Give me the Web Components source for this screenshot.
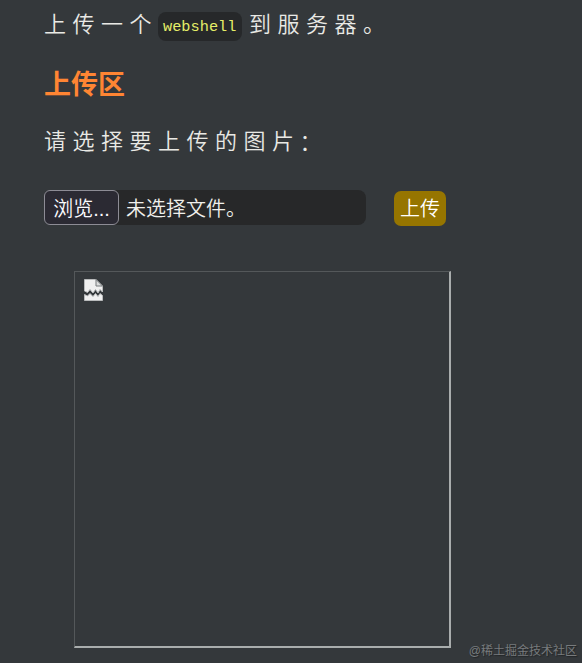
<!DOCTYPE html>
<html lang="zh-CN">
<head>
<meta charset="utf-8">
<title>上传区</title>
<style>
    body {
        margin: 0;
        background: #34383b;
    }
</style>
</head>
<body>
<upload-page>
    <task-text>上传一个<code-tag>webshell</code-tag>到服务器。</task-text>
    <section-title>上传区</section-title>
    <task-text>请选择要上传的图片<text-colon>：</text-colon></task-text>
    <upload-form>
        <file-field label="浏览...">未选择文件。</file-field>
        <submit-button>上传</submit-button>
    </upload-form>
    <image-preview></image-preview>
    <water-mark slot="mark">@稀土掘金技术社区</water-mark>
</upload-page>

<script>
class BaseElement extends HTMLElement {
    constructor() {
        super();
        this.attachShadow({mode: 'open'});
        this.shadowRoot.innerHTML = this.constructor.template;
    }
}

class UploadPage extends BaseElement {
    static template = `
<style>
    :host {
        display: block;
        position: relative;
        box-sizing: border-box;
        width: 582px;
        height: 663px;
        padding: 7px 0 0 44px;
        overflow: hidden;
        background: #34383b;
        color: #e9e9e5;
        font-family: "Liberation Sans", "Noto Sans CJK SC", sans-serif;
    }
    .content {
        display: flex;
        flex-direction: column;
        align-items: flex-start;
    }
</style>
<div class="content"><slot></slot></div>
<slot name="mark"></slot>`;
}
customElements.define('upload-page', UploadPage);

class TaskText extends BaseElement {
    static template = `
<style>
    :host {
        display: flex;
        align-items: center;
        height: 36px;
        font-size: 22px;
        font-weight: 350;
        line-height: 36px;
        letter-spacing: 6.5px;
        white-space: nowrap;
    }
</style>
<slot></slot>`;
}
customElements.define('task-text', TaskText);

class TextColon extends BaseElement {
    static template = `
<style>
    :host {
        display: block;
        margin: 2px 0 0 -1px;
    }
</style>
<slot></slot>`;
}
customElements.define('text-colon', TextColon);

class CodeTag extends BaseElement {
    static template = `
<style>
    :host {
        display: block;
        box-sizing: border-box;
        width: 84px;
        height: 29px;
        margin: 3px 7px 0 0;
        padding-left: 5px;
        border-radius: 8px;
        background: #26282a;
        color: #e5ee68;
        font: 400 15.3px/30px "Liberation Mono", monospace;
        letter-spacing: 0;
    }
</style>
<slot></slot>`;
}
customElements.define('code-tag', CodeTag);

class SectionTitle extends BaseElement {
    static template = `
<style>
    :host {
        display: block;
        height: 40px;
        margin: 22px 0 19px;
        color: #ff8533;
        font-size: 27px;
        font-weight: 700;
        line-height: 40px;
    }
</style>
<slot></slot>`;
}
customElements.define('section-title', SectionTitle);

class UploadForm extends BaseElement {
    static template = `
<style>
    :host {
        display: flex;
        gap: 28px;
        margin-top: 30px;
        font-size: 20px;
    }
</style>
<slot></slot>`;
}
customElements.define('upload-form', UploadForm);

class FileField extends BaseElement {
    static template = `
<style>
    :host {
        display: flex;
        gap: 7px;
        width: 322px;
        height: 35px;
        border-radius: 8px;
        background: #272829;
        color: #f0f0ec;
        line-height: 38px;
        font-weight: 350;
    }
    button {
        box-sizing: border-box;
        width: 75px;
        height: 35px;
        padding: 2px 0 0;
        border: 1px solid #8d8c95;
        border-radius: 6px;
        background: #2b2a33;
        color: #fbfbfe;
        font: inherit;
        line-height: 33px;
    }
</style>
<button type="button"></button>
<slot></slot>`;
    connectedCallback() {
        this.shadowRoot.querySelector('button').textContent = this.getAttribute('label');
    }
}
customElements.define('file-field', FileField);

class SubmitButton extends BaseElement {
    static template = `
<style>
    :host {
        display: block;
        margin-top: 1px;
        font-weight: 350;
    }
    button {
        width: 52px;
        height: 35px;
        padding: 1px 0 0;
        border: 0;
        border-radius: 7px;
        background: #967500;
        color: #fff;
        font: inherit;
        line-height: 34px;
    }
</style>
<button type="button"><slot></slot></button>`;
}
customElements.define('submit-button', SubmitButton);

class ImagePreview extends BaseElement {
    static template = `
<style>
    :host {
        display: block;
        box-sizing: border-box;
        width: 377px;
        height: 377px;
        margin: 45px 0 0 30px;
        padding: 7px 9px;
        border: solid;
        border-width: 1px 2px 2px 1px;
        border-color: #54585a #a9adad #a9adad #54585a;
    }
    svg {
        display: block;
    }
</style>
<svg width="20" height="22" viewBox="0 0 20 22">
    <path d="M.5 .5H12L18.5 7V13L16 10.5L14 14L11.5 10.5L9 14L6 10.5L3.5 13.5L.5 12Z" fill="#f0f0f0" stroke="#b9bbbc"/>
    <path d="M.5 15.5L3.5 17L6 14.5L9 17.5L11.5 14.5L14 17.5L16 14.5L18.5 16.5V21.5H.5Z" fill="#f0f0f0" stroke="#b9bbbc"/>
    <path d="M12 .5V7H18.5Z" fill="#dcdddd" stroke="#777b7d"/>
</svg>`;
}
customElements.define('image-preview', ImagePreview);

class WaterMark extends BaseElement {
    static template = `
<style>
    :host {
        position: absolute;
        right: 5px;
        bottom: 3px;
        color: #787b7d;
        font-size: 12px;
        line-height: 18px;
        text-shadow: 1px 1px 1px #222527;
    }
</style>
<slot></slot>`;
}
customElements.define('water-mark', WaterMark);
</script>
</body>
</html>
